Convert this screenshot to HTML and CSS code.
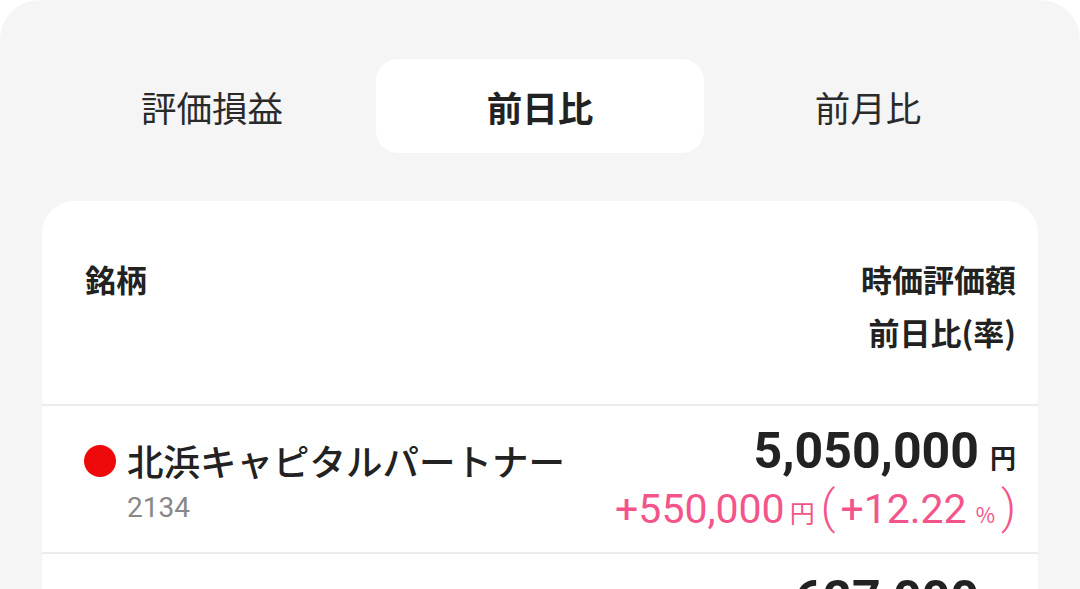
FILE: index.html
```html
<!DOCTYPE html>
<html lang="ja">
<head>
<meta charset="utf-8">
<link rel="stylesheet" href="styles.css">
</head>
<body>
<div class="panel">
  <div class="tabs">
    <div class="tab">評価損益</div>
    <div class="tab active">前日比</div>
    <div class="tab">前月比</div>
  </div>
  <div class="card">
    <div class="head">
      <div class="head-left">銘柄</div>
      <div class="head-right">
        <div>時価評価額</div>
        <div>前日比(率)</div>
      </div>
    </div>
    <div class="row">
      <div class="name-col">
        <div class="name"><span class="dot"></span>北浜キャピタルパートナー</div>
        <div class="code">2134</div>
      </div>
      <div class="val-col">
        <div class="value">5,050,000<span class="yen">円</span></div>
        <div class="diff">+550,000<span class="unit">円</span><span class="paren open">(</span>+12.22<span class="pct">%</span><span class="paren close">)</span></div>
      </div>
    </div>
    <div class="row">
      <div class="name-col">
        <div class="name"><span class="dot"></span>銘柄</div>
      </div>
      <div class="val-col">
        <div class="value">627,000<span class="yen">円</span></div>
      </div>
    </div>
  </div>
</div>
</body>
</html>
```

FILE: styles.css
```css
* { box-sizing: border-box; }
html, body {
  margin: 0;
  padding: 0;
  background: #ffffff;
}
body {
  font-family: Roboto, "Noto Sans CJK JP", sans-serif;
  color: #222222;
  overflow: hidden;
  height: 589px;
}
.panel {
  background: #f5f5f5;
  border-radius: 40px 40px 0 0;
  padding: 59px 48px 0 42px;
  height: 589px;
  overflow: hidden;
}
.tabs {
  display: grid;
  grid-template-columns: repeat(3, 328px);
  margin-left: 6px;
}
.tab {
  height: 94px;
  display: flex;
  align-items: center;
  justify-content: center;
  font-family: "Noto Sans CJK JP", sans-serif;
  font-size: 35.5px;
  color: #2a2a2a;
  border-radius: 22px;
}
.tab.active {
  background: #ffffff;
  font-weight: 700;
  color: #222222;
}
.card {
  margin-top: 48px;
  width: 996px;
  background: #ffffff;
  border-radius: 32px 32px 0 0;
}
.head {
  display: flex;
  justify-content: space-between;
  padding: 51px 22px 46px 43px;
  border-bottom: 2px solid #ebebeb;
  font-family: "Noto Sans CJK JP", sans-serif;
  font-weight: 700;
  font-size: 31px;
  line-height: 53px;
  color: #222222;
}
.head-right { text-align: right; }
.row {
  display: flex;
  justify-content: space-between;
  padding: 15px 22px 20px 42px;
  border-bottom: 2px solid #ebebeb;
}
.name {
  display: flex;
  align-items: center;
  font-family: "Noto Sans CJK JP", sans-serif;
  font-weight: 500;
  font-size: 36.5px;
  line-height: 60px;
  color: #222222;
  margin-top: 10px;
}
.dot {
  width: 32px;
  height: 32px;
  border-radius: 50%;
  background: #ee0a0a;
  margin-right: 11px;
}
.code {
  font-family: Roboto, sans-serif;
  font-size: 28px;
  color: #888888;
  margin-left: 43px;
  margin-top: 2px;
  line-height: 30px;
}
.val-col { text-align: right; }
.value {
  font-family: Roboto, sans-serif;
  font-weight: 700;
  font-size: 50px;
  line-height: 60px;
  color: #222222;
}
.yen {
  font-family: "Noto Sans CJK JP", sans-serif;
  font-size: 26px;
  font-weight: 700;
  line-height: 1;
  margin-left: 11px;
}
.diff {
  margin-top: 3px;
  font-family: Roboto, sans-serif;
  font-size: 41px;
  line-height: 46px;
  color: #f3558a;
}
.unit {
  font-family: "Noto Sans CJK JP", sans-serif;
  font-size: 25px;
  line-height: 1;
  margin-left: 5px;
}
.paren {
  font-family: Roboto, sans-serif;
  font-weight: 300;
  font-size: 46px;
  line-height: 1;
}
.paren.open { margin: 0 5px 0 6px; }
.pct {
  font-family: "Noto Sans CJK JP", sans-serif;
  font-size: 21px;
  line-height: 1;
  margin: 0 6px 0 9px;
}
```
